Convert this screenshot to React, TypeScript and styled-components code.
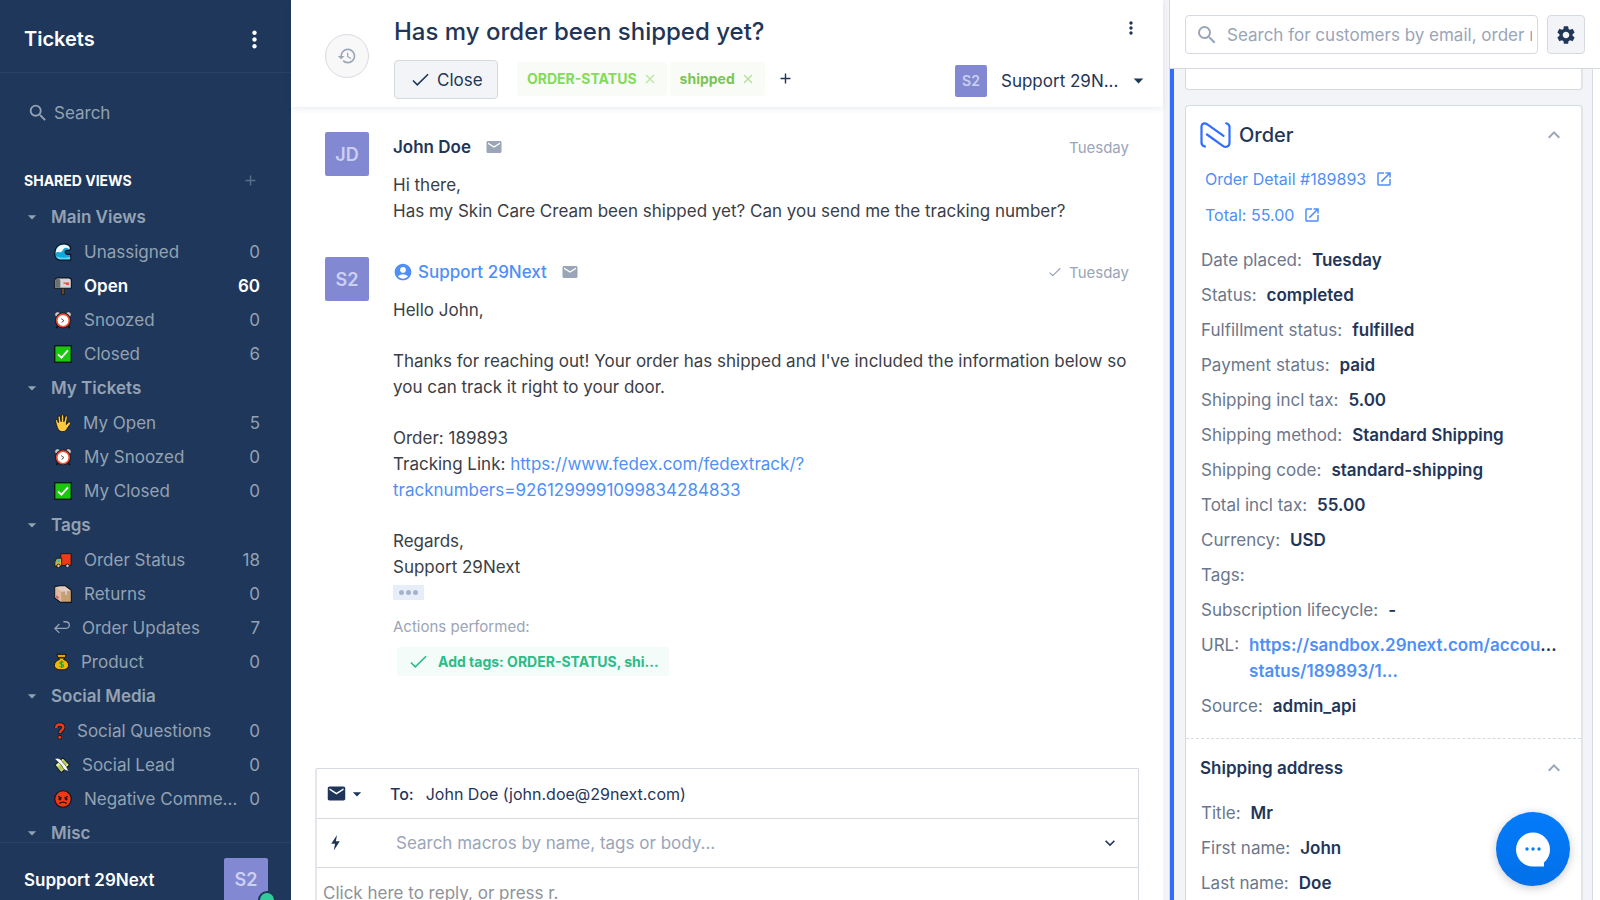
import React from 'react';
import styled, { createGlobalStyle, css } from 'styled-components';
import {
  MdSearch, MdMoreVert, MdHistory, MdEmail, MdAccountCircle, MdOpenInNew,
  MdSettings, MdArrowDropDown, MdAdd, MdExpandLess, MdExpandMore,
} from 'react-icons/md';

const c = {
  navy: '#1e375a',
  navyText: '#94a2b3',
  ink: '#1f3659',
  muted: '#9aa5b8',
  label: '#6b778c',
  link: '#4f8ff7',
  line: '#d5dae1',
  panel: '#f3f4f7',
  violet: '#8289d2',
};

const GlobalStyle = createGlobalStyle`
  * { box-sizing: border-box; }
  body { margin: 0; font-family: Inter, "Liberation Sans", sans-serif; font-size: 17px; color: ${c.ink}; background: #fff; }
  button, input, select, textarea { font: inherit; color: inherit; border: 0; background: none; padding: 0; margin: 0; outline: 0; }
  button, select { cursor: pointer; }
  a { color: inherit; text-decoration: none; }
  h1, h2, h3, p, ul, dl, dd { margin: 0; padding: 0; }
  svg { flex: none; display: block; }
`;

const Shell = styled.div`
  display: grid;
  grid-template-columns: 291px minmax(0, 1fr) 431px;
  height: 100vh;
  overflow: hidden;
`;

/* Sidebar */
const Sidebar = styled.aside`
  background: ${c.navy};
  color: ${c.navyText};
  display: flex;
  flex-direction: column;
  min-height: 0;
`;
const SidebarHeader = styled.header`
  height: 73px;
  flex: none;
  padding: 6px 23px 0 24px;
  display: flex;
  align-items: center;
  justify-content: space-between;
  border-bottom: 1px solid #2a4163;
  color: #fff;
`;
const SidebarTitle = styled.h1`
  font-size: 20px;
  line-height: 24px;
  font-weight: 600;
`;
const IconButton = styled.button`
  display: flex;
  align-items: center;
  justify-content: center;
`;
const SidebarSearch = styled.label`
  flex: none;
  display: flex;
  align-items: center;
  gap: 5px;
  height: 24px;
  margin: 28px 24px 0 27px;
  input { width: 180px; }
  input::placeholder { color: ${c.navyText}; opacity: 1; }
`;
const SectionTitle = styled.div`
  flex: none;
  display: flex;
  align-items: center;
  justify-content: space-between;
  height: 24px;
  margin: 43px 32px 8px 24px;
  h2 { font-size: 14px; font-weight: 700; color: #fff; }
  button { color: #5b6f8b; }
`;
const ViewList = styled.nav`
  flex: 1;
  min-height: 0;
  overflow: hidden;
`;
const GroupButton = styled.button`
  display: flex;
  align-items: center;
  gap: 9px;
  width: 100%;
  height: 33px;
  margin-bottom: 2px;
  padding-left: 22px;
  font-weight: 600;
`;
const ViewLink = styled.a<{ $active?: boolean }>`
  display: flex;
  align-items: center;
  gap: 12px;
  height: 34px;
  padding: 0 31px 0 54px;
  ${(p) => p.$active && css`color: #fff; font-weight: 600;`}
`;
const ViewName = styled.span`
  flex: 1;
  min-width: 0;
  white-space: nowrap;
`;
const SidebarFooter = styled.footer`
  flex: none;
  height: 58px;
  overflow: hidden;
  border-top: 1px solid #2a4163;
  padding: 15px 23px 0 24px;
  display: flex;
  justify-content: space-between;
  color: #fff;
  font-weight: 600;
  line-height: 44px;
`;
const AvatarWrap = styled.span`
  position: relative;
  height: 44px;
`;
const Presence = styled.i`
  position: absolute;
  right: -8px;
  bottom: -7px;
  width: 18px;
  height: 18px;
  border-radius: 50%;
  background: #2ecc98;
  border: 2px solid ${c.navy};
`;
const Avatar = styled.span<{ $size: number }>`
  display: flex;
  flex: none;
  align-items: center;
  justify-content: center;
  width: ${(p) => p.$size}px;
  height: ${(p) => p.$size}px;
  border-radius: 2px;
  background: ${c.violet};
  color: #ccd0f0;
  font-size: ${(p) => (p.$size > 40 ? 18 : 14)}px;
  font-weight: 600;
`;

/* Ticket */
const Ticket = styled.main`
  display: flex;
  flex: 1;
  flex-direction: column;
  min-width: 0;
  min-height: 0;
`;
const TicketHeader = styled.header`
  flex: none;
  display: flex;
  gap: 25px;
  height: 107px;
  padding: 16px 13px 0 34px;
  box-shadow: 0 2px 6px rgba(31, 54, 89, 0.09);
`;
const HistoryButton = styled(IconButton)`
  width: 44px;
  height: 44px;
  margin-top: 18px;
  flex: none;
  border: 1px solid #d8dbe2;
  border-radius: 50%;
  background: #f8f8f9;
  color: ${c.muted};
`;
const HeaderBody = styled.div`
  flex: 1;
  min-width: 0;
`;
const HeaderRow = styled.div`
  display: flex;
  align-items: center;
`;
const TitleRow = styled(HeaderRow)`
  height: 32px;
  margin-bottom: 12px;
  padding-right: 9px;
  justify-content: space-between;
  h2 { font-size: 24px; line-height: 32px; font-weight: 450; }
  button { margin-top: -8px; }
`;
const CloseButton = styled.button`
  display: flex;
  align-items: center;
  gap: 8px;
  width: 104px;
  height: 39px;
  padding-left: 17px;
  margin-right: 19px;
  border: 1px solid ${c.line};
  border-radius: 4px;
  background: ${c.panel};
`;
const Tag = styled.span<{ $color: string }>`
  display: flex;
  align-items: center;
  gap: 8px;
  height: 34px;
  margin: 0 3px 2px 0;
  padding: 0 12px 0 10px;
  border-radius: 3px;
  background: #f9fcf6;
  color: ${(p) => p.$color};
  font-size: 14px;
  font-weight: 700;
  button { opacity: 0.55; }
`;
const AddTag = styled(IconButton)`
  margin: 0 auto 2px 9px;
`;
const Assignee = styled.label`
  display: flex;
  align-items: center;
  margin-top: 2px;
  select { appearance: none; width: 126px; margin-left: 14px; line-height: 24px; }
`;
const Thread = styled.section`
  flex: 1;
  min-height: 0;
  overflow: hidden;
  padding: 25px 34px 0 34px;
`;
const Message = styled.article`
  display: flex;
  gap: 24px;
  margin-bottom: 33px;
`;
const MessageBody = styled.div`
  flex: 1;
  min-width: 0;
`;
const MessageHead = styled.div`
  display: flex;
  align-items: center;
  height: 30px;
  margin-bottom: 10px;
  svg { color: ${c.muted}; }
`;
const Author = styled.strong<{ $agent?: boolean }>`
  display: flex;
  align-items: center;
  gap: 5px;
  margin-right: 14px;
  font-weight: ${(p) => (p.$agent ? 500 : 600)};
  color: ${(p) => (p.$agent ? c.link : c.ink)};
  svg { color: ${c.link}; }
`;
const Time = styled.time`
  display: flex;
  align-items: center;
  gap: 8px;
  margin-left: auto;
  color: ${c.muted};
  font-size: 15px;
`;
const Para = styled.p`
  line-height: 26px;
  color: #3a3e46;
  & + & { margin-top: 25px; }
  a { color: ${c.link}; }
`;
const QuoteToggle = styled(IconButton)`
  width: 31px;
  height: 15px;
  margin-top: 5px;
  gap: 2px;
  background: #e6eefa;
  i { width: 5px; height: 5px; border-radius: 50%; background: #a9b2cd; }
`;
const ActionsLabel = styled.p`
  margin-top: 17px;
  font-size: 15px;
  line-height: 20px;
  color: ${c.muted};
`;
const ActionChip = styled.span`
  display: inline-flex;
  align-items: center;
  gap: 11px;
  height: 29px;
  margin: 10px 0 0 4px;
  padding: 0 10px 0 13px;
  border-radius: 3px;
  background: #f3fcf8;
  color: #2dbb88;
  font-size: 14px;
  font-weight: 700;
`;
const Composer = styled.form`
  flex: none;
  height: 132px;
  overflow: hidden;
  margin: 0 24px;
  border: 1px solid ${c.line};
  border-bottom: 0;
  border-left: 2px solid #e4e6eb;
  border-radius: 2px 2px 0 0;
`;
const ComposerRow = styled.div`
  display: flex;
  align-items: center;
  height: 50px;
  padding: 0 18px 0 9px;
  border-bottom: 1px solid ${c.line};
  & + & { height: 49px; }
  input { flex: 1; }
  input::placeholder { color: ${c.muted}; opacity: 1; }
`;
const Slot = styled.div<{ $w: number }>`
  width: ${(p) => p.$w}px;
  flex: none;
`;
const Recipient = styled.span`
  display: flex;
  gap: 12px;
  font-size: 16px;
  b { font-weight: 500; }
`;
const Reply = styled.textarea`
  display: block;
  width: 100%;
  height: 60px;
  padding: 12px 6px;
  resize: none;
  line-height: 26px;
  &::placeholder { color: #8e9298; opacity: 1; }
`;

/* Customer panel */
const Customer = styled.aside`
  display: flex;
  flex-direction: column;
  min-height: 0;
  position: relative;
  border-left: 1px solid ${c.line};
`;
const MainArea = styled.div`
  display: flex;
  min-height: 0;
  border-right: 6px solid ${c.panel};
`;
const CustomerHeader = styled.header`
  flex: none;
  display: flex;
  gap: 9px;
  height: 69px;
  padding: 15px 15px 0 15px;
  border-bottom: 1px solid ${c.line};
`;
const SearchBox = styled.label`
  display: flex;
  align-items: center;
  flex: 1;
  height: 39px;
  padding: 0 5px 0 9px;
  gap: 8px;
  border: 1px solid ${c.line};
  border-radius: 4px;
  color: ${c.muted};
  input { flex: 1; min-width: 0; }
  input::placeholder { color: ${c.muted}; opacity: 1; }
`;
const GearButton = styled(IconButton)`
  width: 38px;
  height: 39px;
  border: 1px solid ${c.line};
  border-radius: 4px;
  background: ${c.panel};
`;
const CardScroll = styled.div`
  flex: 1;
  min-height: 0;
  overflow: hidden;
  margin-right: 7px;
  padding: 0 9px 0 11px;
  border-left: 4px solid #316dff;
  border-right: 1px solid ${c.line};
  background: ${c.panel};
`;
const Card = styled.section`
  background: #fff;
  border: 1px solid ${c.line};
  border-right: 2px solid #e1e4e9;
  border-radius: 4px;
  margin-bottom: 15px;
`;
const CardTail = styled(Card)`
  height: 21px;
  border-top: 0;
  border-radius: 0 0 4px 4px;
`;
const CardHeader = styled.div<{ $big?: boolean }>`
  display: flex;
  align-items: center;
  justify-content: space-between;
  height: ${(p) => (p.$big ? 55 : 58)}px;
  padding: ${(p) => (p.$big ? 2 : 0)}px 15px 0 14px;
  button { color: ${c.muted}; }
  h2, h3 { display: flex; align-items: center; gap: 8px; font-weight: ${(p) => (p.$big ? 500 : 600)}; font-size: ${(p) => (p.$big ? 20 : 17)}px; }
`;
const QuickLink = styled.a`
  display: flex;
  align-items: center;
  gap: 9px;
  height: 36px;
  padding-left: 19px;
  color: ${c.link};
  font-size: 16px;
`;
const Fields = styled.dl<{ $top: number }>`
  padding: ${(p) => p.$top}px 15px 10px 15px;
  div { display: flex; gap: 10px; margin-bottom: 9px; line-height: 26px; }
  dt { color: ${c.label}; white-space: nowrap; }
  dd { font-weight: 600; min-width: 0; }
  dd a { display: block; color: ${c.link}; }
`;
const UrlTail = styled.span`
  color: ${c.ink};
`;
const Divided = styled.div`
  border-top: 1px dashed ${c.line};
`;
const ChatButton = styled(IconButton)`
  position: absolute;
  right: 30px;
  bottom: 14px;
  width: 74px;
  height: 74px;
  border-radius: 50%;
  background: linear-gradient(#047bfb, #0270e8);
  box-shadow: 0 2px 10px rgba(0, 0, 0, 0.22);
`;

const Check = ({ size = 18 }: { size?: number }) => (
  <svg width={size} height={size} viewBox="0 0 18 18" fill="none" stroke="currentColor" strokeWidth="1.7">
    <path d="M1 10l4.6 4.6L17 3.4" />
  </svg>
);
const Cross = () => (
  <svg width="10" height="10" viewBox="0 0 10 10" fill="none" stroke="currentColor" strokeWidth="1.3">
    <path d="M1 1l8 8M9 1l-8 8" />
  </svg>
);
const Bolt = () => (
  <svg width="19" height="16" viewBox="0 0 19 16" fill="currentColor">
    <path d="M11 0L5.200 8.800H9L7.900 15.500L13.800 6.300H9.900z" />
  </svg>
);
const BrandMark = () => (
  <svg width="31" height="26" viewBox="0 0 31 26" fill="none" stroke="#316dff" strokeWidth="2.2" strokeLinecap="round" strokeLinejoin="round">
    <path d="M5 24.500C2.600 24 1.500 22.500 1.500 20.500V4.500C1.500 1.500 4.500 0.600 7 2.200L23.500 13.800" />
    <path d="M7 12.500L22.800 23.800C26 26 29.500 24.500 29.500 21V5C29.500 3 28.500 1.800 26.200 1.300" />
  </svg>
);
const ChatGlyph = () => (
  <svg width="34" height="35" viewBox="0 0 34 35">
    <path fill="#fff" d="M17 0.500a17 17 0 0 1 17 17c0 5-2 9.500-6 13V34.500H17a17 17 0 0 1 0-34z" />
    <g fill="#0a7cf5"><circle cx="11" cy="17" r="1.700" /><circle cx="17" cy="17" r="1.700" /><circle cx="23" cy="17" r="1.700" /></g>
  </svg>
);

/* Each entry: drawn width, viewBox width, artwork */
const emoji: Record<string, [number, number, React.ReactNode]> = {
  wave: [18, 20, <>
    <path d="M18.500 19H7C2.500 19 .6 15 .8 11 1 5 5 1 10.500 1c4 0 8 1.500 8 5.500 0 1-1 1.800-2.500 1.800C13 8 12 9 12.500 11c.5 1.500 3 2 6 1.700z" fill="#12a8d8" stroke="#10151c" strokeWidth="1.300" />
    <path d="M2 11C2 5.500 6 2 10.500 2c4 0 6.800 1.300 7 4.500-2 0-3-1.800-5-1.200-2.500.7-2.500 3.500-4.500 4.700S3.500 9 2 11z" fill="#f4f6f8" />
    <path d="M2.500 14.500c3 2 9 2.500 15.500 1v2.500H7c-2.300 0-4-1.500-4.500-3.500z" fill="#5fd6f2" />
  </>],
  mailbox: [18, 20, <>
    <path d="M8.500 11h3v8.500h-3z" fill="#7a4a2a" stroke="#10151c" strokeWidth=".8" />
    <path d="M4 1h12.500C18.300 1 19.300 2.500 19.300 4v8.500H.8V4C.8 2.500 2 1 4 1z" fill="#d5d5d8" stroke="#10151c" strokeWidth="1.300" />
    <path d="M1.500 12V4.500C1.500 2.500 2.500 1.600 4.200 1.600S7 2.500 7 4.500V12z" fill="#6d6e72" />
    <path d="M10.500 6h6v2.800h-3V7.500h-3z" fill="#f0452c" />
  </>],
  alarm: [18, 20, <>
    <path d="M4 17l-1.500 2M16 17l1.500 2" stroke="#10151c" strokeWidth="2" />
    <circle cx="4" cy="4" r="3.200" fill="#c8cbd0" stroke="#10151c" strokeWidth=".8" />
    <circle cx="16" cy="4" r="3.200" fill="#c8cbd0" stroke="#10151c" strokeWidth=".8" />
    <circle cx="10" cy="10.500" r="7.300" fill="#fff" stroke="#10151c" strokeWidth="3" />
    <circle cx="10" cy="10.500" r="7" fill="#fff" stroke="#ee4a2d" strokeWidth="1.900" />
    <path d="M8 8.500l3 2.200-2.500 2" stroke="#333" strokeWidth="1" fill="none" />
  </>],
  done: [18, 20, <>
    <rect x=".8" y=".8" width="18.400" height="18.400" fill="#1ac70c" stroke="#10151c" strokeWidth="1.500" />
    <path d="M4.500 10.500l3.700 3.500 7.300-8" stroke="#fff" strokeWidth="2" fill="none" />
  </>],
  hand: [17, 18, <>
    <path d="M6 19C3.500 17 2.500 13.500 1.200 7.500c0-1.700 1.900-1.700 2.400-.2l.9 2.200L4 3.500c0-1.800 2.300-1.800 2.700 0l.8 5 .2-6.500c.2-1.600 2.500-1.600 2.700 0l.1 6.600 1.500-5.600c.6-1.500 2.700-1 2.500.6l-1.400 8 2.600-2.300c1.300-1 3.200.4 2 2C15 14.500 14 17 12.500 18.500 11 19.800 8 20 6 19z" fill="#ffc83d" stroke="#10151c" strokeWidth="1" />
  </>],
  truck: [18, 20, <>
    <path d="M7.500 3H19v13H7.500z" fill="#f03a17" stroke="#10151c" strokeWidth="1" />
    <path d="M3 8h5.500v9H1v-5z" fill="#ffb400" stroke="#10151c" strokeWidth="1" />
    <path d="M3.500 9H7v3.500H2.200z" fill="#2cc3e6" />
    <circle cx="5" cy="16.500" r="2" fill="#c8cbd0" stroke="#10151c" /><circle cx="15" cy="16.500" r="2" fill="#c8cbd0" stroke="#10151c" />
  </>],
  box: [18, 20, <>
    <path d="M1 1.500L12 .7 19.300 6v13.300H7.500L1 14.500z" fill="#c79f72" stroke="#10151c" strokeWidth="1.200" />
    <path d="M1.500 2.200L12 1.300 18.500 6.500 8 7.500z" fill="#e9cdb8" />
    <path d="M1.500 2.500L8 7.500V19l-6.500-5z" fill="#dcb9a0" />
    <path d="M5.500 2l7 5.600v3.500l2-.2V7L8 1.800z" fill="#cfd0d4" />
    <path d="M2.500 11.500l2.500 2v2L2.500 13.500z" fill="#e8374b" />
  </>],
  bag: [15, 18, <>
    <path d="M5.500 5h7l-1 2c4 1 6 4 6 7 0 3.500-3 5.400-8.500 5.400S.5 17.500.5 14c0-3 2-6 6-7z" fill="#f7b500" stroke="#10151c" strokeWidth="1.200" />
    <path d="M3.500.8h11l-1 4h-9z" fill="#e8a400" stroke="#10151c" strokeWidth="1.200" />
    <path d="M11.500 10.500C10 9.300 7 9.600 7 11.200c0 2 4.500 1.200 4.500 3.200 0 1.800-3.300 2-4.800.8M9.200 8.300v9" stroke="#1a9e2f" strokeWidth="1.300" fill="none" />
  </>],
  question: [11, 13, <>
    <path d="M2.500 6.500C2.500 .8 11.500 1 11 6c-.3 3-4 3.500-4 7" stroke="#10151c" strokeWidth="4.800" fill="none" />
    <circle cx="6.800" cy="17.300" r="2.600" fill="#10151c" />
    <path d="M2.500 6.500C2.500 .8 11.500 1 11 6c-.3 3-4 3.500-4 6.500" stroke="#f03a17" strokeWidth="2.900" fill="none" />
    <circle cx="6.800" cy="17.300" r="1.800" fill="#f03a17" />
  </>],
  money: [16, 19, <>
    <path d="M1.200 10L10.500 1.500l8 8.500L8.500 19z" fill="#dfeb96" stroke="#10151c" strokeWidth="1.200" />
    <path d="M4.500 12.500l4-4 4 4.500-4 4zM11 4l4.500 5-2 2-4-4.500z" fill="#b3c952" />
    <path d="M.8 2.500C5 1 8.500 3 10.500 7l4 4.500 3 6C13 17 10.500 14.500 9.500 11L5.500 7z" fill="#f4f6f8" stroke="#10151c" strokeWidth=".6" />
  </>],
  angry: [18, 20, <>
    <circle cx="10" cy="10" r="9.200" fill="#f03a17" stroke="#10151c" strokeWidth="1.300" />
    <path d="M4.500 7l4 2M15.500 7l-4 2" stroke="#10151c" strokeWidth="1.300" />
    <circle cx="6.500" cy="10" r="1.600" fill="#2a1210" /><circle cx="13.500" cy="10" r="1.600" fill="#2a1210" />
    <path d="M6 15c2-2 6-2 8 0" stroke="#10151c" strokeWidth="1.400" fill="none" />
  </>],
  reply: [16, 18, <>
    <path d="M6 5.500L1 10.500l5 5M1 10.500H13c5.800 0 5.500-7.500 0-7.500h-2.500" stroke={c.navyText} strokeWidth="1.500" fill="none" />
  </>],
};

const Emoji = ({ name }: { name: string }) => {
  const [w, vw, art] = emoji[name];
  return <svg width={w} height="18" viewBox={`0 0 ${vw} 20`} aria-hidden>{art}</svg>;
};

const groups: { name: string; items: [string, string, number][] }[] = [
  { name: 'Main Views', items: [['wave', 'Unassigned', 0], ['mailbox', 'Open', 60], ['alarm', 'Snoozed', 0], ['done', 'Closed', 6]] },
  { name: 'My Tickets', items: [['hand', 'My Open', 5], ['alarm', 'My Snoozed', 0], ['done', 'My Closed', 0]] },
  { name: 'Tags', items: [['truck', 'Order Status', 18], ['box', 'Returns', 0], ['reply', 'Order Updates', 7], ['bag', 'Product', 0]] },
  { name: 'Social Media', items: [['question', 'Social Questions', 0], ['money', 'Social Lead', 0], ['angry', 'Negative Comme...', 0]] },
  { name: 'Misc', items: [] },
];

const orderFields: [string, React.ReactNode][] = [
  ['Date placed:', 'Tuesday'],
  ['Status:', 'completed'],
  ['Fulfillment status:', 'fulfilled'],
  ['Payment status:', 'paid'],
  ['Shipping incl tax:', '5.00'],
  ['Shipping method:', 'Standard Shipping'],
  ['Shipping code:', 'standard-shipping'],
  ['Total incl tax:', '55.00'],
  ['Currency:', 'USD'],
  ['Tags:', ''],
  ['Subscription lifecycle:', '-'],
  ['URL:', <a href="#order-url">https://sandbox.29next.com/accou<UrlTail>...</UrlTail><br />status/189893/1...</a>],
  ['Source:', 'admin_api'],
];
const addressFields: [string, React.ReactNode][] = [['Title:', 'Mr'], ['First name:', 'John'], ['Last name:', 'Doe']];

const FieldList = ({ rows, top }: { rows: [string, React.ReactNode][]; top: number }) => (
  <Fields $top={top}>{rows.map(([k, v]) => <div key={k}><dt>{k}</dt><dd>{v}</dd></div>)}</Fields>
);

export default function App() {
  return (
    <Shell>
      <GlobalStyle />
      <Sidebar>
        <SidebarHeader>
          <SidebarTitle>Tickets</SidebarTitle>
          <IconButton aria-label="More"><MdMoreVert size={27} /></IconButton>
        </SidebarHeader>
        <SidebarSearch>
          <MdSearch size={22} />
          <input placeholder="Search" aria-label="Search" />
        </SidebarSearch>
        <SectionTitle>
          <h2>SHARED VIEWS</h2>
          <IconButton aria-label="Add view"><MdAdd size={17} /></IconButton>
        </SectionTitle>
        <ViewList>
          {groups.map((g) => (
            <React.Fragment key={g.name}>
              <GroupButton><MdArrowDropDown size={20} />{g.name}</GroupButton>
              {g.items.map(([icon, name, count]) => (
                <ViewLink key={name} href="#view" $active={name === 'Open'}>
                  <Emoji name={icon} /><ViewName>{name}</ViewName><span>{count}</span>
                </ViewLink>
              ))}
            </React.Fragment>
          ))}
        </ViewList>
        <SidebarFooter>
          <span>Support 29Next</span>
          <AvatarWrap><Avatar $size={44}>S2</Avatar><Presence /></AvatarWrap>
        </SidebarFooter>
      </Sidebar>

      <MainArea>
        <Ticket>
          <TicketHeader>
            <HistoryButton aria-label="History"><MdHistory size={20} /></HistoryButton>
            <HeaderBody>
              <TitleRow>
                <h2>Has my order been shipped yet?</h2>
                <IconButton aria-label="Ticket menu"><MdMoreVert size={20} /></IconButton>
              </TitleRow>
              <HeaderRow>
                <CloseButton><Check size={17} />Close</CloseButton>
                <Tag $color="#84db57">ORDER-STATUS<IconButton aria-label="Remove ORDER-STATUS"><Cross /></IconButton></Tag>
                <Tag $color="#7cc45a">shipped<IconButton aria-label="Remove shipped"><Cross /></IconButton></Tag>
                <AddTag aria-label="Add tag"><MdAdd size={17} /></AddTag>
                <Assignee>
                  <Avatar $size={32}>S2</Avatar>
                  <select aria-label="Assignee"><option>Support 29N...</option></select>
                  <MdArrowDropDown size={23} />
                </Assignee>
              </HeaderRow>
            </HeaderBody>
          </TicketHeader>

          <Thread>
            <Message>
              <Avatar $size={44}>JD</Avatar>
              <MessageBody>
                <MessageHead><Author>John Doe</Author><MdEmail size={18} /><Time>Tuesday</Time></MessageHead>
                <Para>Hi there,<br />Has my Skin Care Cream been shipped yet? Can you send me the tracking number?</Para>
              </MessageBody>
            </Message>
            <Message>
              <Avatar $size={44}>S2</Avatar>
              <MessageBody>
                <MessageHead>
                  <Author $agent><MdAccountCircle size={20} />Support 29Next</Author><MdEmail size={18} />
                  <Time><Check size={12} />Tuesday</Time>
                </MessageHead>
                <Para>Hello John,</Para>
                <Para>Thanks for reaching out! Your order has shipped and I've included the information below so<br />you can track it right to your door.</Para>
                <Para>Order: 189893<br />Tracking Link: <a href="#tracking">https://www.fedex.com/fedextrack/?<br />tracknumbers=9261299991099834284833</a></Para>
                <Para>Regards,<br />Support 29Next</Para>
                <QuoteToggle aria-label="Show quoted text"><i /><i /><i /></QuoteToggle>
                <ActionsLabel>Actions performed:</ActionsLabel>
                <ActionChip><Check size={17} />Add tags: ORDER-STATUS, shi...</ActionChip>
              </MessageBody>
            </Message>
          </Thread>

          <Composer>
            <ComposerRow>
              <Slot $w={64}><IconButton type="button" aria-label="Channel"><MdEmail size={21} /><MdArrowDropDown size={20} /></IconButton></Slot>
              <Recipient><b>To:</b><span>John Doe (john.doe@29next.com)</span></Recipient>
            </ComposerRow>
            <ComposerRow>
              <Slot $w={70}><Bolt /></Slot>
              <input placeholder="Search macros by name, tags or body..." aria-label="Search macros" />
              <IconButton type="button" aria-label="Show macros"><MdExpandMore size={20} /></IconButton>
            </ComposerRow>
            <Reply placeholder="Click here to reply, or press r." aria-label="Reply" />
          </Composer>
        </Ticket>
      </MainArea>

      <Customer>
        <CustomerHeader>
          <SearchBox>
            <MdSearch size={24} />
            <input placeholder="Search for customers by email, order number" aria-label="Search customers" />
          </SearchBox>
          <GearButton aria-label="Settings"><MdSettings size={22} /></GearButton>
        </CustomerHeader>
        <CardScroll>
          <CardTail />
          <Card>
            <CardHeader $big>
              <h2><BrandMark />Order</h2>
              <IconButton aria-label="Collapse order"><MdExpandLess size={24} /></IconButton>
            </CardHeader>
            <QuickLink href="#order">Order Detail #189893 <MdOpenInNew size={18} /></QuickLink>
            <QuickLink href="#total">Total: 55.00 <MdOpenInNew size={18} /></QuickLink>
            <FieldList rows={orderFields} top={14} />
            <Divided>
              <CardHeader>
                <h3>Shipping address</h3>
                <IconButton aria-label="Collapse address"><MdExpandLess size={24} /></IconButton>
              </CardHeader>
              <FieldList rows={addressFields} top={3} />
            </Divided>
          </Card>
        </CardScroll>
        <ChatButton aria-label="Open chat"><ChatGlyph /></ChatButton>
      </Customer>
    </Shell>
  );
}
